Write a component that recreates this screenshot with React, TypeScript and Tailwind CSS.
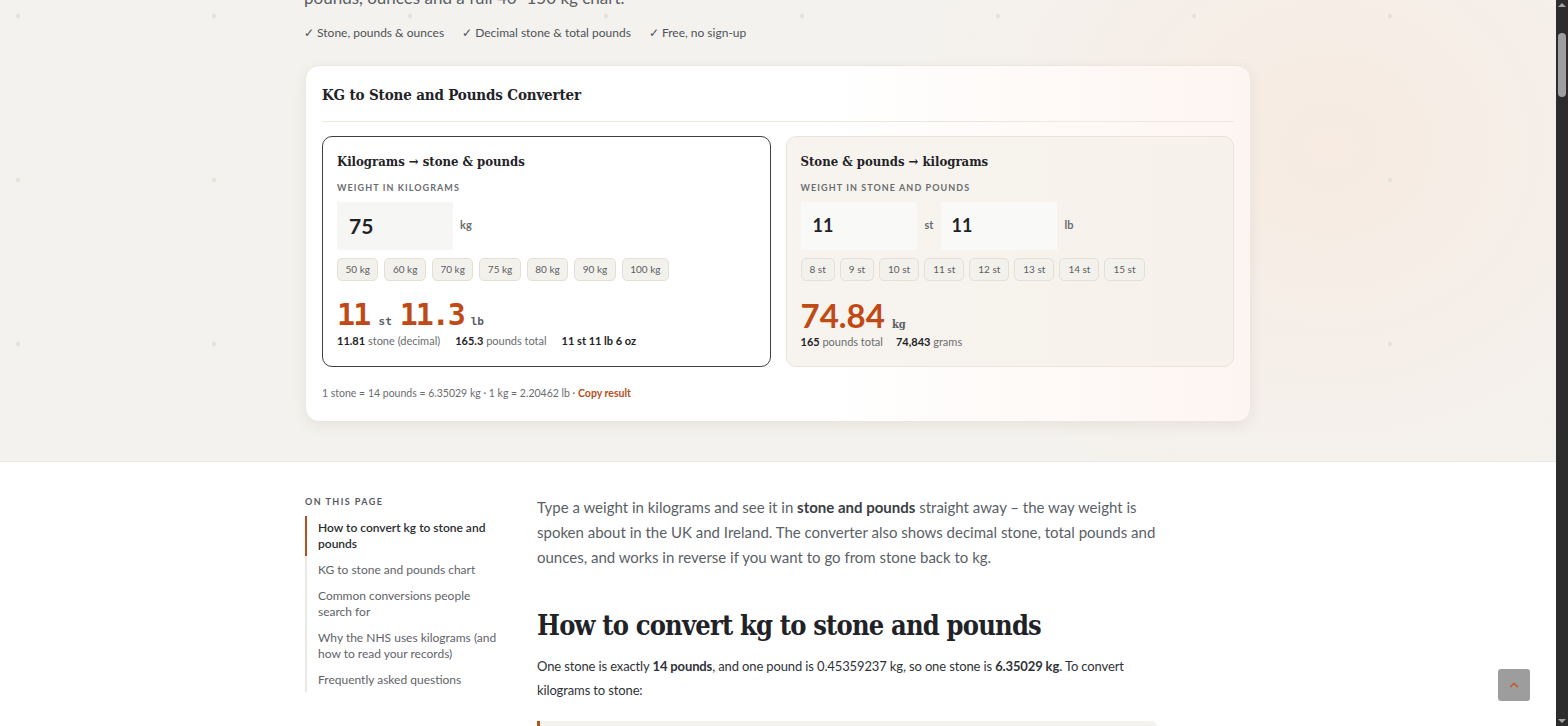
import { ChevronUp } from "lucide-react";

const kgPresets = [50, 60, 70, 75, 80, 90, 100];
const stPresets = [8, 9, 10, 11, 12, 13, 14, 15];

const toc = [
  "How to convert kg to stone and pounds",
  "KG to stone and pounds chart",
  "Common conversions people search for",
  "Why the NHS uses kilograms (and how to read your records)",
  "Frequently asked questions",
];

function Chip({ label, tight }: { label: string; tight?: boolean }) {
  return (
    <button
      className={`h-[23px] ${tight ? "px-[7.5px]" : "px-[8px]"} rounded-[5px] border border-[#e4e0d7] bg-[#f3f1ec] text-[10px] text-[#5b5f63] leading-none`}
    >
      {label}
    </button>
  );
}

function FieldLabel({ children }: { children: string }) {
  return (
    <div className="mt-[10px] text-[9px] font-bold uppercase tracking-[0.12em] text-[#6a6d70]">
      {children}
    </div>
  );
}

export default function App() {
  return (
    <div className="flex h-[726px] w-full overflow-hidden bg-white font-['Lato',sans-serif] text-[#2a2d31]">
      <div className="relative flex-1 overflow-hidden">
        {/* Hero with converter */}
        <section className="border-b border-[#ebe8e2] bg-[radial-gradient(ellipse_420px_380px_at_1330px_160px,#f7ebe2,#f4f2ee_100%)]">
          <div className="bg-[radial-gradient(circle_at_18px_30px,#e7e3dc_2px,transparent_2.6px)] bg-[size:196px_164px] pb-[39px]">
            <div className="mx-auto w-[948px]">
              <p className="-mt-[14px] text-[17px] leading-[24px] text-[#5a5f66]">
                pounds, ounces and a full 40–150 kg chart.
              </p>
              <ul className="mt-[14px] flex gap-[18px] text-[12px] text-[#4e5358]">
                <li>✓ Stone, pounds &amp; ounces</li>
                <li>✓ Decimal stone &amp; total pounds</li>
                <li>✓ Free, no sign-up</li>
              </ul>

              <div className="mt-[23px] ml-px w-[946px] rounded-[14px] border border-[#ebe7e0] bg-[linear-gradient(90deg,#ffffff_0%,#ffffff_55%,#fdf5f1_100%)] px-[16px] pt-[18px] pb-[19px] shadow-[0_4px_14px_rgba(60,40,20,0.07)]">
                <h1 className="font-['DejaVu_Serif_Condensed','DejaVu_Serif',serif] text-[15px] font-bold leading-[22px] tracking-[-0.01em] text-[#1f2328]">
                  KG to Stone and Pounds Converter
                </h1>
                <div className="mt-[15px] h-px bg-[#ebe7e1]" />

                <div className="mt-[14px] grid grid-cols-2 gap-[15px]">
                  {/* kg -> stone */}
                  <div className="h-[231px] rounded-[10px] border border-[#3d3f42] bg-white px-[14px] pt-[16px]">
                    <h2 className="font-['DejaVu_Serif_Condensed','DejaVu_Serif',serif] text-[13px] font-bold leading-[18px] text-[#1f2328]">
                      Kilograms → stone &amp; pounds
                    </h2>
                    <FieldLabel>Weight in kilograms</FieldLabel>
                    <div className="mt-[7px] flex items-start gap-[7px]">
                      <div className="flex h-[48px] w-[116px] items-center bg-[#f6f6f4] pl-[12px] text-[21px] font-bold text-[#1f2328]">
                        75
                      </div>
                      <span className="mt-[15px] text-[11px] font-bold text-[#6a6d70]">kg</span>
                    </div>
                    <div className="mt-[8px] flex gap-[6px]">
                      {kgPresets.map((k) => (
                        <Chip key={k} label={`${k} kg`} tight />
                      ))}
                    </div>
                    <div className="mt-[17px] flex items-baseline font-['DejaVu_Sans_Mono',monospace] font-bold text-[#c04a16]">
                      <span className="text-[30px] leading-[34px] tracking-[-0.06em]">11</span>
                      <span className="ml-[9px] text-[11px] text-[#5a5f66]">st</span>
                      <span className="ml-[8px] text-[30px] leading-[34px] tracking-[-0.07em]">11.3</span>
                      <span className="ml-[7px] text-[11px] text-[#5a5f66]">lb</span>
                    </div>
                    <div className="mt-[1px] flex gap-[15px] text-[11px] text-[#6a6d70]">
                      <span>
                        <b className="text-[#1f2328]">11.81</b> stone (decimal)
                      </span>
                      <span>
                        <b className="text-[#1f2328]">165.3</b> pounds total
                      </span>
                      <b className="text-[#1f2328]">11 st 11 lb 6 oz</b>
                    </div>
                  </div>

                  {/* stone -> kg */}
                  <div className="h-[231px] rounded-[10px] border border-[#ebe4da] bg-[linear-gradient(90deg,#f7f4ef,#f6f1ea)] px-[14px] pt-[16px]">
                    <h2 className="font-['DejaVu_Serif_Condensed','DejaVu_Serif',serif] text-[13px] font-bold leading-[18px] text-[#1f2328]">
                      Stone &amp; pounds → kilograms
                    </h2>
                    <FieldLabel>Weight in stone and pounds</FieldLabel>
                    <div className="mt-[7px] flex items-start">
                      <div className="flex h-[48px] w-[116px] items-center bg-[#f9f9f8] pl-[12px] text-[18px] font-bold text-[#1f2328]">
                        11
                      </div>
                      <span className="mx-[8px] mt-[15px] text-[11px] font-bold text-[#6a6d70]">st</span>
                      <div className="flex h-[48px] w-[116px] items-center bg-[#f9f9f8] pl-[10px] text-[18px] font-bold text-[#1f2328]">
                        11
                      </div>
                      <span className="ml-[7px] mt-[15px] text-[11px] font-bold text-[#6a6d70]">lb</span>
                    </div>
                    <div className="mt-[8px] flex gap-[5px]">
                      {stPresets.map((s) => (
                        <Chip key={s} label={`${s} st`} />
                      ))}
                    </div>
                    <div className="mt-[17px] flex items-baseline font-bold text-[#c04a16]">
                      <span className="text-[33px] leading-[34px]">74.84</span>
                      <span className="ml-[7px] font-['DejaVu_Serif_Condensed','DejaVu_Serif',serif] text-[11px] text-[#5a5f66]">
                        kg
                      </span>
                    </div>
                    <div className="mt-[1px] flex gap-[13px] text-[11px] text-[#6a6d70]">
                      <span>
                        <b className="text-[#1f2328]">165</b> pounds total
                      </span>
                      <span>
                        <b className="text-[#1f2328]">74,843</b> grams
                      </span>
                    </div>
                  </div>
                </div>

                <p className="mt-[19px] text-[10.5px] text-[#6a6d70]">
                  1 stone = 14 pounds = 6.35029 kg · 1 kg = 2.20462 lb ·{" "}
                  <a href="#" className="font-bold text-[#b5501d]">
                    Copy result
                  </a>
                </p>
              </div>
            </div>
          </div>
        </section>

        {/* Article */}
        <div className="mx-auto flex w-[948px] pt-[33px]">
          <aside className="w-[233px] shrink-0 pl-px">
            <div className="text-[9px] font-bold uppercase tracking-[0.16em] text-[#55595e]">On this page</div>
            <ul className="mt-[8px] flex flex-col gap-[2px] border-l-2 border-[#ebe8e3]">
              {toc.map((t, i) => (
                <li
                  key={t}
                  className={
                    i === 0
                      ? "-ml-[2px] border-l-2 border-[#b5501d] py-[4px] pl-[11px] pr-[36px] text-[12px] leading-[16px] font-semibold text-[#2a2d31]"
                      : "py-[4px] pl-[11px] pr-[36px] text-[12px] leading-[16px] text-[#5f6368]"
                  }
                >
                  {t}
                </li>
              ))}
            </ul>
          </aside>

          <article className="w-[620px]">
            <p className="text-[15px] leading-[25px] text-[#5a5f66]">
              Type a weight in kilograms and see it in{" "}
              <b className="text-[#3a3e43]">stone and pounds</b> straight away – the way weight is spoken
              about in the UK and Ireland. The converter also shows decimal stone, total pounds and
              ounces, and works in reverse if you want to go from stone back to kg.
            </p>
            <h2 className="mt-[38px] font-['DejaVu_Serif_Condensed','DejaVu_Serif',serif] text-[27px] font-bold leading-[36px] tracking-[-0.03em] text-[#1f2328]">
              How to convert kg to stone and pounds
            </h2>
            <p className="mt-[10px] text-[13px] leading-[24px] tracking-[-0.01em] text-[#2f3337]">
              One stone is exactly <b>14 pounds</b>, and one pound is 0.45359237 kg, so one stone is{" "}
              <b>6.35029 kg</b>. To convert kilograms to stone:
            </p>
            <div className="mt-[19px] h-[40px] rounded-r-[6px] border-l-[3px] border-[#b5501d] bg-[#f5f3ef]" />
          </article>
        </div>

        {/* back to top */}
        <button className="absolute left-[1498px] top-[669px] flex h-[32px] w-[32px] items-center justify-center rounded-[3px] bg-[#9d9d9d]">
          <ChevronUp className="h-[14px] w-[14px] text-[#c05a30]" strokeWidth={2.5} />
        </button>
      </div>

      {/* scrollbar */}
      <div className="flex w-[12px] shrink-0 flex-col items-center bg-[#2c2c2c]">
        <div className="mt-[3px] h-0 w-0 border-x-[4px] border-b-[4px] border-x-transparent border-b-[#a3a3a3]" />
        <div className="mt-[26px] h-[64px] w-[8px] rounded-[4px] bg-[#9e9e9e]" />
        <div className="flex-1" />
        <div className="mb-[3px] h-0 w-0 border-x-[4px] border-t-[4px] border-x-transparent border-t-[#a3a3a3]" />
      </div>
    </div>
  );
}
